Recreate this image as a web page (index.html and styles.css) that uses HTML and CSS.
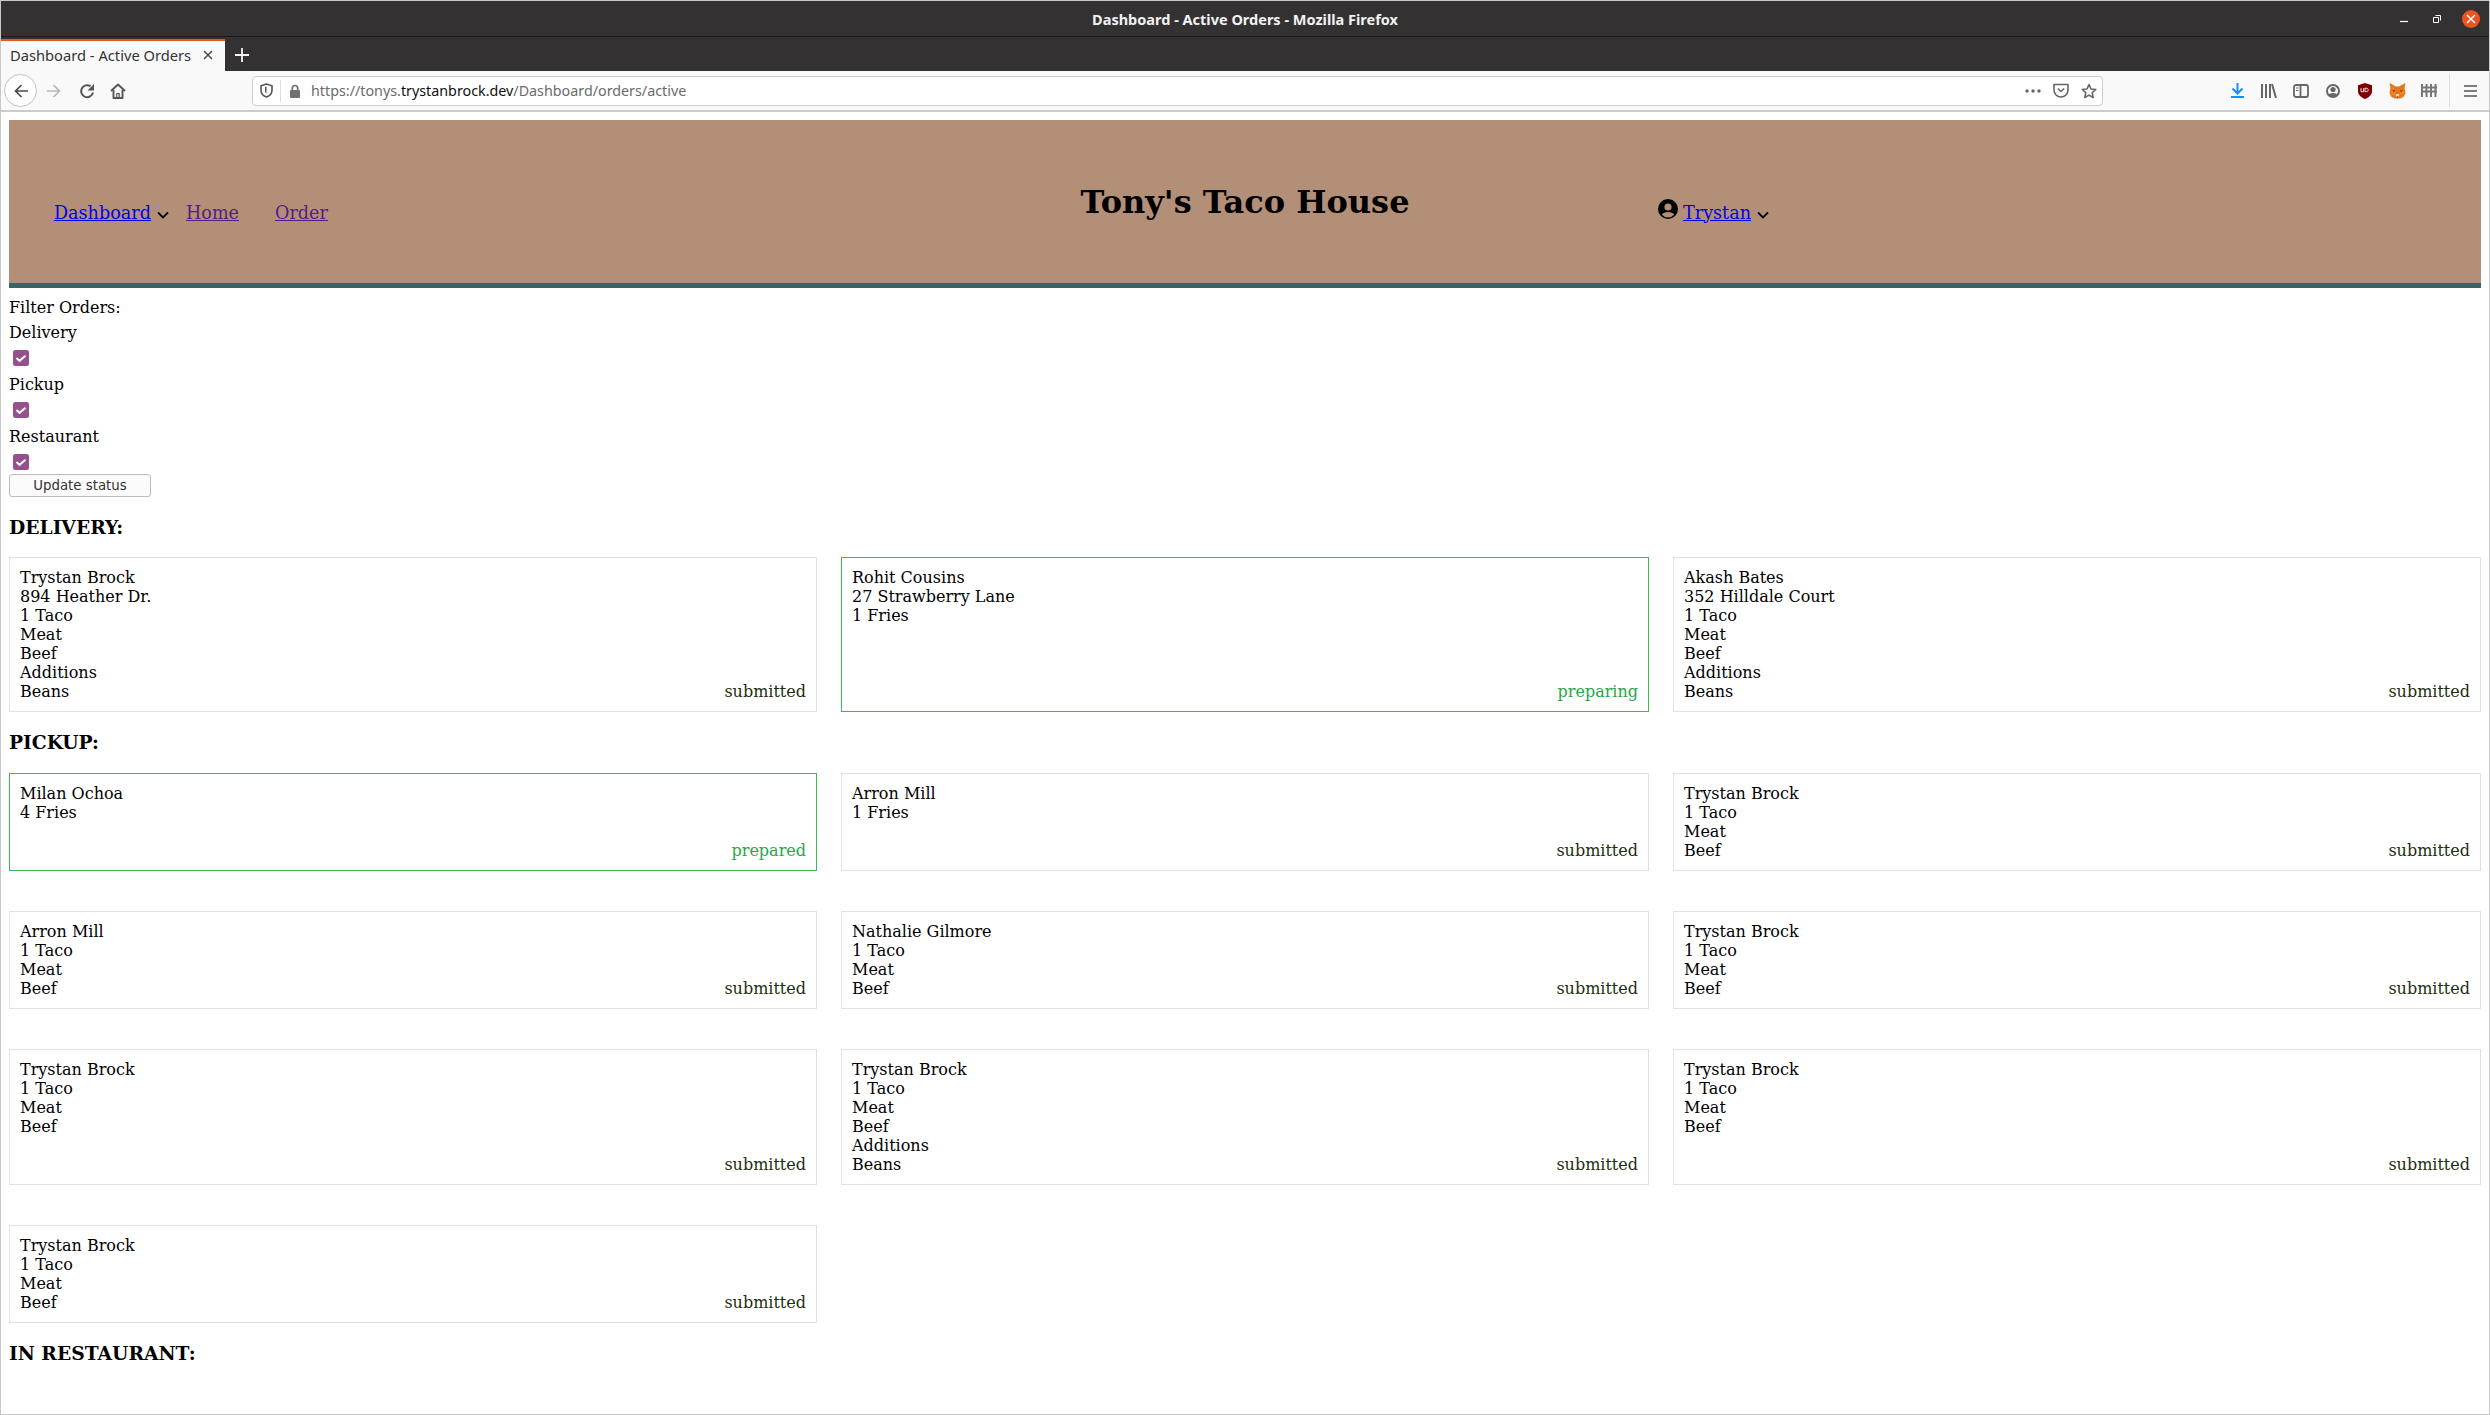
FILE: index.html
```html
<!DOCTYPE html>
<html lang="en">
<head>
<meta charset="utf-8">
<title>Dashboard - Active Orders</title>
<link rel="stylesheet" href="styles.css">
</head>
<body>
<div class="window">
  <div class="titlebar">
    <div class="titlebar-side"></div>
    <div class="titlebar-title">Dashboard - Active Orders - Mozilla Firefox</div>
    <div class="titlebar-side controls">
      <svg width="10" height="10" viewBox="0 0 10 10" class="ctl-min"><path d="M1 7.500h8" stroke="#fff" stroke-width="1.200"/></svg>
      <svg width="10" height="10" viewBox="0 0 10 10" class="ctl-max"><path d="M1.500 3.500h5v5h-5zM3.500 1.500h5v5" fill="none" stroke="#fff" stroke-width="1"/></svg>
      <span class="ctl-close"><svg width="18" height="18" viewBox="0 0 18 18"><path d="M5 5l8 8M13 5l-8 8" stroke="#fff" stroke-width="1.400"/></svg></span>
    </div>
  </div>
  <div class="tabbar">
    <div class="tab"><span class="tab-label">Dashboard - Active Orders</span>
      <svg width="10" height="10" viewBox="0 0 10 10"><path d="M1 1l8 8M9 1l-8 8" stroke="#444" stroke-width="1.400"/></svg>
    </div>
    <svg class="newtab" width="14" height="14" viewBox="0 0 14 14"><path d="M7 0v14M0 7h14" stroke="#f4f4f4" stroke-width="1.800"/></svg>
  </div>
  <div class="toolbar">
    <div class="nav-buttons">
      <span class="back"><svg width="16" height="16" viewBox="0 0 16 16"><path d="M15 8H2.500M8.500 2L2.500 8l6 6" fill="none" stroke="#4a4a4a" stroke-width="1.700"/></svg></span>
      <svg class="forward" width="16" height="16" viewBox="0 0 16 16"><path d="M1 8h12.500M7.500 2l6 6-6 6" fill="none" stroke="#b8b8b8" stroke-width="1.700"/></svg>
      <svg class="reload" width="16" height="16" viewBox="0 0 16 16"><path d="M14 9.500A6 6 0 1 1 11.500 3.200" fill="none" stroke="#555" stroke-width="2"/><path d="M15 1v6.500H8.500z" fill="#555"/></svg>
      <svg class="home" width="16" height="16" viewBox="0 0 16 16"><path d="M1 8L8 1.500 15 8" fill="none" stroke="#555" stroke-width="1.900" stroke-linejoin="round"/><path d="M3.500 7v8h9V7" fill="none" stroke="#555" stroke-width="1.900" stroke-linejoin="round"/><path d="M6.800 15v-4.500h2.400V15" fill="none" stroke="#555" stroke-width="1.200"/></svg>
    </div>
    <div class="urlbar">
      <svg class="shield" width="13" height="15" viewBox="0 0 13 15"><path d="M6.500 1L1 2.800v4.500C1 10.500 3.500 13 6.500 14c3-1 5.500-3.500 5.500-6.700V2.800z" fill="none" stroke="#555" stroke-width="1.600"/><path d="M6.500 3.500L5 4v3.500c0 1.500.700 2.500 1.500 3z" fill="#555"/></svg>
      <span class="url-sep"></span>
      <svg class="lock" width="12" height="14" viewBox="0 0 12 14"><path d="M3.300 6.500V4.200a2.700 2.700 0 0 1 5.400 0v2.300" fill="none" stroke="#707070" stroke-width="1.700"/><rect x="1" y="6" width="10" height="8" rx="1" fill="#707070"/></svg>
      <span class="url">https://tonys.<b class="url-domain">trystanbrock.dev</b>/Dashboard/orders/active</span>
      <span class="url-spacer"></span>
      <svg class="dots" width="16" height="4" viewBox="0 0 16 4"><circle cx="2" cy="2" r="1.700"/><circle cx="8" cy="2" r="1.700"/><circle cx="14" cy="2" r="1.700"/></svg>
      <svg class="pocket" width="16" height="15" viewBox="0 0 16 15"><path d="M1 1.500h14v5.500a7 7 0 0 1-14 0z" fill="none" stroke="#666" stroke-width="1.600" stroke-linejoin="round"/><path d="M4.800 5.500L8 8.500l3.200-3" fill="none" stroke="#666" stroke-width="1.600"/></svg>
      <svg class="star" width="16" height="16" viewBox="0 0 16 16"><path d="M8 1.500l2 4.500 4.800.5-3.600 3.200 1 4.800L8 12.100 3.800 14.500l1-4.800L1.200 6.500 6 6z" fill="none" stroke="#666" stroke-width="1.600" stroke-linejoin="round"/></svg>
    </div>
    <div class="extensions">
      <svg width="13" height="15" viewBox="0 0 13 15"><path d="M6.500 0v10M1.500 5.500l5 5 5-5" fill="none" stroke="#1a8cff" stroke-width="2"/><path d="M0 14h13" stroke="#1a8cff" stroke-width="2"/></svg>
      <svg width="16" height="14" viewBox="0 0 16 14"><path d="M1 0v14M5 0v14M9 0v14M11 0l4 14" fill="none" stroke="#666" stroke-width="2"/></svg>
      <svg width="16" height="14" viewBox="0 0 16 14"><rect x="1" y="1" width="14" height="12" rx="2" fill="none" stroke="#666" stroke-width="1.800"/><path d="M7.500 1v12" stroke="#666" stroke-width="1.800"/><path d="M3 4h2.500M3 6.500h2.500" stroke="#666" stroke-width="1"/></svg>
      <svg width="14" height="14" viewBox="0 0 14 14"><circle cx="7" cy="7" r="6" fill="none" stroke="#666" stroke-width="2"/><circle cx="7" cy="5.500" r="2.600" fill="#666"/><path d="M2.500 11c1-2.800 8-2.800 9 0L7 13.500z" fill="#666"/></svg>
      <svg width="14" height="16" viewBox="0 0 14 16"><path d="M7 0L0 2.200v6C0 12 3.500 14.800 7 16c3.500-1.200 7-4 7-7.800v-6z" fill="#800000"/><path d="M3 5.200v3.500h2.600V5.200M7 5.200v3.500h1.500c2.200 0 2.200-3.500 0-3.500z" fill="none" stroke="#fff" stroke-width="0.900"/></svg>
      <svg width="17" height="16" viewBox="0 0 17 16"><path d="M0.500 0L7 3.500h3L16.500 0l-1 5 1 5-2 4-3.500 1.500H6L2.500 14l-2-4 1-5z" fill="#e2761b"/><path d="M1.500 9l3-5 2 6.500-2.500 2zM15.500 9l-3-5-2 6.500 2.500 2z" fill="#f6851b"/><path d="M3 6.500l3 1-1 2zM14 6.500l-3 1 1 2z" fill="#763d16"/><path d="M6.500 11h4L9.500 14h-2z" fill="#f6d2b0"/><path d="M7.500 13.500h2L8.500 15z" fill="#233447"/></svg>
      <svg width="16" height="13" viewBox="0 0 16 13"><path d="M1 0v13M5.500 0v13M10 0v13M14.500 0v13M0 3.500h16M0 7.500h16" fill="none" stroke="#777" stroke-width="2"/></svg>
      <span class="toolbar-sep"></span>
      <svg class="hamburger" width="13" height="12" viewBox="0 0 13 12"><path d="M0 1h13M0 6h13M0 11h13" stroke="#555" stroke-width="1.700"/></svg>
    </div>
  </div>
  <div class="viewport">
    <header class="site-header">
      <nav class="main-nav">
        <a class="link active" href="#">Dashboard</a>
        <svg class="chev" width="12" height="8" viewBox="0 0 12 8"><path d="M1 1.500l5 5 5-5" fill="none" stroke="#000" stroke-width="1.800"/></svg>
        <a class="link visited home-link" href="#">Home</a>
        <a class="link visited order-link" href="#">Order</a>
      </nav>
      <h1 class="site-title">Tony's Taco House</h1>
      <div class="user-nav">
        <svg class="user-icon" width="20" height="20" viewBox="0 0 20 20"><circle cx="10" cy="10" r="10" fill="#000"/><circle cx="10" cy="8" r="3.600" fill="#b48f77"/><path d="M3.800 15.500c1.500-3.500 10.900-3.500 12.400 0A8 8 0 0 1 3.800 15.500z" fill="#b48f77"/></svg>
        <a class="link active" href="#">Trystan</a>
        <svg class="chev" width="12" height="8" viewBox="0 0 12 8"><path d="M1 1.500l5 5 5-5" fill="none" stroke="#000" stroke-width="1.800"/></svg>
      </div>
    </header>

    <div class="filter-title">Filter Orders:</div>
    <div class="filter-label">Delivery</div>
    <div class="filter-check"><svg width="16" height="16" viewBox="0 0 16 16"><rect width="16" height="16" rx="2.500" fill="#95508d"/><path d="M3.500 8l3 2.800 6-5" fill="none" stroke="#fff" stroke-width="2"/></svg></div>
    <div class="filter-label">Pickup</div>
    <div class="filter-check"><svg width="16" height="16" viewBox="0 0 16 16"><rect width="16" height="16" rx="2.500" fill="#95508d"/><path d="M3.500 8l3 2.800 6-5" fill="none" stroke="#fff" stroke-width="2"/></svg></div>
    <div class="filter-label">Restaurant</div>
    <div class="filter-check"><svg width="16" height="16" viewBox="0 0 16 16"><rect width="16" height="16" rx="2.500" fill="#95508d"/><path d="M3.500 8l3 2.800 6-5" fill="none" stroke="#fff" stroke-width="2"/></svg></div>
    <button class="update-btn" type="button">Update status</button>

    <h3 class="section-title first">DELIVERY:</h3>
    <div class="orders">
      <div class="card"><div class="lines">Trystan Brock<br>894 Heather Dr.<br>1 Taco<br>Meat<br>Beef<br>Additions<br>Beans</div><span class="status">submitted</span></div>
      <div class="card live"><div class="lines">Rohit Cousins<br>27 Strawberry Lane<br>1 Fries</div><span class="status">preparing</span></div>
      <div class="card"><div class="lines">Akash Bates<br>352 Hilldale Court<br>1 Taco<br>Meat<br>Beef<br>Additions<br>Beans</div><span class="status">submitted</span></div>
    </div>

    <h3 class="section-title">PICKUP:</h3>
    <div class="orders">
      <div class="card live"><div class="lines">Milan Ochoa<br>4 Fries</div><span class="status">prepared</span></div>
      <div class="card"><div class="lines">Arron Mill<br>1 Fries</div><span class="status">submitted</span></div>
      <div class="card"><div class="lines">Trystan Brock<br>1 Taco<br>Meat<br>Beef</div><span class="status">submitted</span></div>
      <div class="card"><div class="lines">Arron Mill<br>1 Taco<br>Meat<br>Beef</div><span class="status">submitted</span></div>
      <div class="card"><div class="lines">Nathalie Gilmore<br>1 Taco<br>Meat<br>Beef</div><span class="status">submitted</span></div>
      <div class="card"><div class="lines">Trystan Brock<br>1 Taco<br>Meat<br>Beef</div><span class="status">submitted</span></div>
      <div class="card"><div class="lines">Trystan Brock<br>1 Taco<br>Meat<br>Beef</div><span class="status">submitted</span></div>
      <div class="card"><div class="lines">Trystan Brock<br>1 Taco<br>Meat<br>Beef<br>Additions<br>Beans</div><span class="status">submitted</span></div>
      <div class="card"><div class="lines">Trystan Brock<br>1 Taco<br>Meat<br>Beef</div><span class="status">submitted</span></div>
      <div class="card"><div class="lines">Trystan Brock<br>1 Taco<br>Meat<br>Beef</div><span class="status">submitted</span></div>
    </div>

    <h3 class="section-title">IN RESTAURANT:</h3>
  </div>
</div>
</body>
</html>
```
FILE: styles.css
```css
* { box-sizing: border-box; }
html, body { margin: 0; padding: 0; height: 100%; overflow: hidden; background: #fff; }
.window {
  width: 2490px; height: 1415px;
  border: 1px solid #c8c8c8;
  display: flex; flex-direction: column; overflow: hidden;
}
.titlebar {
  height: 36px; background: #333132; border-bottom: 1px solid #1c1b1b;
  display: grid; grid-template-columns: 1fr auto 1fr; align-items: center;
  margin: 0 -1px; flex: none;
}
.titlebar-title { font: 700 14.5px "Noto Sans", sans-serif; color: #f2f2f2; }
.controls { display: flex; justify-content: flex-end; align-items: center; gap: 20px; padding-right: 10px; }
.ctl-min { margin-right: 3px; }
.ctl-close { width: 18px; height: 18px; border-radius: 50%; background: #e95420; display: flex; }
.tabbar {
  height: 34px; padding-top: 2px; background: #333132; display: flex; align-items: center; margin: 0 -1px; flex: none;
}
.tab {
  width: 225px; height: 32px; background: #f9f9fa; border-top: 2px solid #e95420;
  display: flex; align-items: center; justify-content: space-between; padding: 0 12px 2px 10px;
}
.tab-label { font: 14.7px "Noto Sans", sans-serif; color: #333; white-space: nowrap; }
.newtab { margin-left: 10px; }
.toolbar {
  height: 41px; background: #f9f9fa; border-bottom: 2px solid #ccc; display: flex; align-items: center; margin: 0 -1px; flex: none;
}
.nav-buttons { width: 252px; display: flex; align-items: center; padding-left: 4px; flex: none; }
.back {
  width: 33px; height: 33px; border: 1px solid #c0c0c0; border-radius: 50%;
  display: flex; align-items: center; justify-content: center; background: #fff;
}
.forward { margin-left: 9px; }
.reload { margin-left: 17px; }
.home { margin-left: 15px; }
.urlbar {
  width: 1851px; height: 30px; background: #fff; border: 1px solid #ccc; border-radius: 4px;
  display: flex; align-items: center; padding: 0 5px 0 7px; flex: none;
}
.url-sep { width: 1px; height: 22px; background: #ddd; margin: 0 8px 0 7px; }
.url { font: 14.3px "Noto Sans", sans-serif; color: #6b6b6b; margin-left: 10px; white-space: nowrap; }
.url-domain { font-weight: 400; color: #111; }
.url-spacer { flex: 1; }
.dots { fill: #666; margin-right: 12px; }
.pocket { margin-right: 12px; }
.extensions { flex: 1; display: flex; align-items: center; padding-left: 118px; }
.extensions svg { flex: none; margin: 0 calc((32px - var(--w, 16px)) / 2); }
.extensions svg[width="13"] { --w: 13px; }
.extensions svg[width="14"] { --w: 14px; }
.extensions svg[width="17"] { --w: 17px; }
.toolbar-sep { width: 1px; height: 33px; background: #ddd; margin-left: 4px; }
.extensions .hamburger { margin: 0 0 0 14px; }
.viewport {
  flex: 1; min-height: 0; padding: 8px 8px 0; overflow: hidden; background: #fff;
  font: 16px/19px "DejaVu Serif", serif; color: #000;
}
.site-header {
  height: 168px; background: #b48f77; border-bottom: 5px solid #336666;
  display: grid; grid-template-columns: 1fr 1fr 1fr; align-items: center;
}
.link { font-size: 17.6px; line-height: 21px; text-decoration: underline; }
.active { color: #0000ee; }
.visited { color: #551a8b; }
.main-nav { display: flex; align-items: center; padding: 23px 0 0 45px; }
.chev { margin-left: 6px; margin-top: 4px; }
.home-link { margin-left: 17px; }
.order-link { margin-left: 36px; }
.site-title { margin: 0; font: 700 32px/38px "DejaVu Serif", serif; text-align: center; }
.user-nav { display: flex; align-items: center; padding: 23px 0 0 1px; }
.user-icon { margin-right: 5px; margin-top: -8px; }
.filter-title { margin-top: 10px; line-height: 20px; }
.filter-label { padding-top: 2px; line-height: 26px; }
.filter-check { height: 24px; display: flex; align-items: center; padding-left: 4px; }
.filter-check svg { display: block; }
.update-btn {
  display: block; width: 142px; height: 23px; padding: 0;
  font: 13.33px "DejaVu Sans", sans-serif; color: #333; background: #fbfbfb;
  border: 1px solid #bbb; border-radius: 3px;
}
.section-title { margin: 19px 0 20px; font: 700 18.72px/22px "DejaVu Serif", serif; }
.section-title.first { margin-bottom: 19px; }
.orders { display: grid; grid-template-columns: repeat(3, 1fr); gap: 40px 24px; }
.card {
  border: 1px solid #e2e2e2; padding: 10px; display: flex; justify-content: space-between; align-items: flex-end;
}
.card.live { border-color: #3cba54; }
.status { color: #1c2e0e; }
.card.live .status { color: #28a745; }
.lines { align-self: flex-start; }
```
